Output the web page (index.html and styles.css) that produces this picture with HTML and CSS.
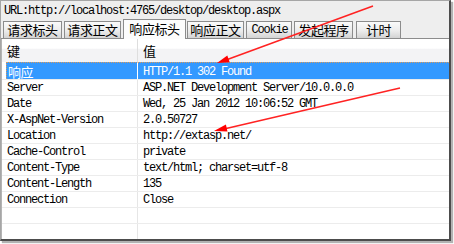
FILE: index.html
```html
<!DOCTYPE html>
<html lang="zh-CN">
  <head>
    <meta charset="UTF-8" />
    <title>响应标头</title>
    <link rel="stylesheet" href="styles.css">
  </head>
  <body>
    <div class="window">
      <div class="url">URL:http://localhost:4765/desktop/desktop.aspx</div>

      <div class="tabs">
        <div class="tab t1 cn">请求标头</div>
        <div class="tab t2 cn">请求正文</div>
        <div class="tab active cn">响应标头</div>
        <div class="tab t4 cn">响应正文</div>
        <div class="tab t5">Cookie</div>
        <div class="tab t6 cn">发起程序</div>
        <div class="tab t7 cn">计时</div>
      </div>

      <div class="list">
        <div class="head">
          <div class="k cn">键</div>
          <div class="v cn">值</div>
        </div>
        <div class="row sel">
          <div class="k cn">响应</div>
          <div class="v">HTTP/1.1 302 Found</div>
        </div>
        <div class="row"><div class="k">Server</div><div class="v">ASP.NET Development Server/10.0.0.0</div></div>
        <div class="row"><div class="k">Date</div><div class="v">Wed, 25 Jan 2012 10:06:52 GMT</div></div>
        <div class="row"><div class="k">X-AspNet-Version</div><div class="v">2.0.50727</div></div>
        <div class="row"><div class="k">Location</div><div class="v">http://extasp.net/</div></div>
        <div class="row"><div class="k">Cache-Control</div><div class="v">private</div></div>
        <div class="row"><div class="k">Content-Type</div><div class="v">text/html; charset=utf-8</div></div>
        <div class="row"><div class="k">Content-Length</div><div class="v">135</div></div>
        <div class="row"><div class="k">Connection</div><div class="v">Close</div></div>
        <div class="row"><div class="k"></div><div class="v"></div></div>
        <div class="row"><div class="k"></div><div class="v"></div></div>
      </div>
    </div>

    <!-- red annotation arrows drawn over the screenshot -->
    <svg class="arrows" width="454" height="244" viewBox="0 0 454 244">
      <line x1="373" y1="6" x2="226" y2="60" stroke="#f22" stroke-width="1.5" />
      <polygon points="217,63 229.7,62.2 227.3,55.6" fill="#f00" />
      <line x1="400" y1="88" x2="224" y2="129" stroke="#f22" stroke-width="1.5" />
      <polygon points="214,131 227.5,131.4 225.9,124.6" fill="#f00" />
    </svg>
  </body>
</html>
```

FILE: styles.css
```css
* {
  margin: 0;
  padding: 0;
  box-sizing: border-box;
}

body {
  position: relative;
  width: 454px;
  height: 244px;
  overflow: hidden;
  background-color: #fff;
  font-family: "Liberation Mono", "Noto Sans CJK SC", monospace;
  font-size: 12px;
  letter-spacing: -1.2px;
  color: #000;
}

.cn {
  font-family: "Noto Sans CJK SC", sans-serif;
  font-size: 13px;
  letter-spacing: -0.4px;
}

.window {
  width: 451px;
  height: 241px;
  background-color: #eeeeee;
  border-left: 1px solid #a6a6a6;
  border-top: 1px solid #a6a6a6;
  border-right: 2px solid #4c4c4c;
  border-bottom: 2px solid #4c4c4c;
  box-shadow: 2px 2px 1px rgba(0, 0, 0, 0.3);
  display: flex;
  flex-direction: column;
}

.url {
  height: 18px;
  line-height: 18px;
  padding: 1px 0 0 3px;
}

.tabs {
  height: 20px;
  display: flex;
  align-items: flex-end;
  padding-left: 2px;
  border-bottom: 1px solid #8c8c8c;
}

.tab {
  height: 17px;
  line-height: 16px;
  text-align: center;
  border: 1px solid #8c8c8c;
  border-bottom: none;
  background: linear-gradient(#fafafa, #ececec 55%, #d3d3d3);
  margin-right: 2px;
}

.tab.active {
  position: relative;
  height: 20px;
  margin-bottom: -1px;
  line-height: 18px;
  background: #fcfcfc;
  width: 63px;
  margin-right: 1px;
}

.t1 { width: 59px; }
.t2 { width: 57px; }
.t4 { width: 57px; }
.t5 { width: 46px; padding-left: 1px; }
.t6 { width: 59px; margin-right: 3px; }
.t7 { width: 45px; }

.list {
  height: 200px;
  overflow: hidden;
  background-color: #fff;
  border-left: 1px solid #b4b4b4;
}

.head {
  display: flex;
  height: 23px;
  line-height: 23px;
  background: linear-gradient(#fff 40%, #f3f3f5 45%);
}

.head .k {
  border-right-color: #dedede;
}

.row {
  display: flex;
  height: 16px;
  line-height: 15px;
  border-bottom: 1px solid #ececec;
}

.k {
  width: 136px;
  padding-left: 5px;
  border-right: 1px solid #e6e6e6;
  white-space: nowrap;
}

.v {
  flex: 1;
  padding-left: 5px;
  white-space: nowrap;
}

.row .k,
.row .v {
  padding-top: 1px;
}

.row.sel {
  height: 18px;
  line-height: 16px;
  color: #fff;
}

.sel .k {
  width: 132px;
  margin-left: 4px;
  padding-left: 1px;
  background-color: #3399ff;
  border-top: 1px dotted #d89a5c;
  border-left: 1px dotted #d89a5c;
  border-right-color: #fff;
}

.sel .v {
  background-color: #3399ff;
  border-top: 1px dotted #d89a5c;
}

.arrows {
  position: absolute;
  left: 0;
  top: 0;
  pointer-events: none;
}
```
